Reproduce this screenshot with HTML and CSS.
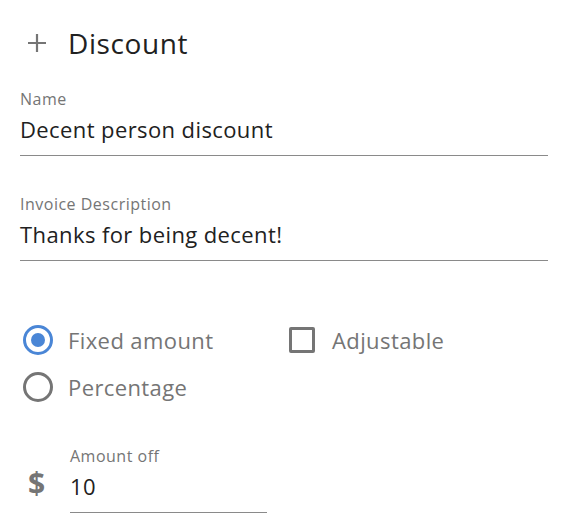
FILE: index.html
```html
<!DOCTYPE html>
<html>
<head>
<meta charset="utf-8">
<link rel="stylesheet" href="styles.css">
</head>
<body>
<div class="page">
  <h1 class="title">
    <svg class="plus" width="20" height="20" viewBox="0 0 20 20"><path d="M10 1v18M1 10h18" stroke="#757575" stroke-width="2.2" fill="none"/></svg>
    <span>Discount</span>
  </h1>

  <div class="field">
    <div class="label">Name</div>
    <div class="value">Decent person discount</div>
  </div>

  <div class="field">
    <div class="label">Invoice Description</div>
    <div class="value">Thanks for being decent!</div>
  </div>

  <div class="options">
    <div class="col">
      <div class="opt"><span class="radio checked"></span><span class="opt-text">Fixed amount</span></div>
      <div class="opt"><span class="radio"></span><span class="opt-text">Percentage</span></div>
    </div>
    <div class="col">
      <div class="opt"><span class="checkbox"></span><span class="opt-text">Adjustable</span></div>
    </div>
  </div>

  <div class="amount">
    <span class="dollar">$</span>
    <div class="field small">
      <div class="label">Amount off</div>
      <div class="value">10</div>
    </div>
  </div>
</div>
</body>
</html>
```
FILE: styles.css
```css
html, body {
  margin: 0;
  padding: 0;
  background: #ffffff;
}
body {
  font-family: "Open Sans", "Noto Sans", sans-serif;
  color: #212121;
}
.page {
  padding: 23px 23px 0 20px;
}
.title {
  display: flex;
  align-items: center;
  gap: 21px;
  margin: 0 0 0 7px;
  font-size: 28px;
  letter-spacing: 0.6px;
  font-weight: 400;
  line-height: 40px;
  color: #212121;
}
.plus {
  display: block;
}
.field {
  margin-top: 26px;
  border-bottom: 1px solid #8a8a8a;
  padding-bottom: 8px;
}
.field + .field {
  margin-top: 38px;
}
.label {
  font-size: 16px;
  letter-spacing: 0.5px;
  line-height: 20px;
  color: #757575;
}
.value {
  font-size: 22px;
  letter-spacing: 0.4px;
  line-height: 36px;
  padding-top: 2px;
  color: #212121;
}
.options {
  display: flex;
  margin-top: 64px;
}
.col {
  display: flex;
  flex-direction: column;
  gap: 17px;
}
.col:first-child {
  width: 269px;
}
.opt {
  display: flex;
  align-items: center;
  height: 30px;
}
.radio {
  box-sizing: border-box;
  width: 30px;
  height: 30px;
  border: 3px solid #757575;
  border-radius: 50%;
  margin-left: 3px;
  display: flex;
  align-items: center;
  justify-content: center;
}
.radio.checked {
  border-color: #4a86d6;
}
.radio.checked::after {
  content: "";
  width: 14px;
  height: 14px;
  border-radius: 50%;
  background: #4a86d6;
}
.checkbox {
  box-sizing: border-box;
  width: 26px;
  height: 26px;
  border: 3px solid #757575;
  border-radius: 2px;
}
.opt-text {
  font-size: 22px;
  letter-spacing: 0.4px;
  color: #757575;
  margin-left: 15px;
}
.checkbox + .opt-text {
  margin-left: 17px;
}
.amount {
  display: flex;
  align-items: flex-end;
  margin-top: 44px;
}
.dollar {
  font-size: 30px;
  line-height: 36px;
  font-weight: 700;
  color: #757575;
  width: 50px;
  padding-left: 8px;
  box-sizing: border-box;
  margin-bottom: 12px;
}
.field.small {
  margin-top: 0;
  width: 197px;
}
```
